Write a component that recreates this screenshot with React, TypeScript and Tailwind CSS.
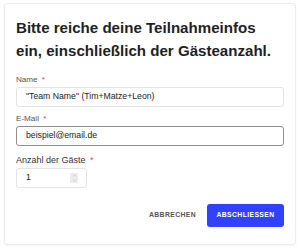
import { ChevronUp, ChevronDown } from "lucide-react";

const font = { fontFamily: '"Liberation Sans", Arial, sans-serif' };

function Label({ text, big = false }: { text: string; big?: boolean }) {
  return (
    <div
      className={`${big ? "h-[13px] leading-[13px] text-[9px] text-[#333] mb-[1px]" : "h-[11px] leading-[11px] text-[8.1px] text-[#555] mb-[2px]"}`}
    >
      {text} <span className="text-[#e0435a] ml-[2px]">*</span>
    </div>
  );
}

export default function App() {
  return (
    <div className="w-[300px] h-[248px] bg-white pt-[3px] px-[4px]" style={font}>
      <div className="h-[242px] rounded-[3px] border border-[#ececec] shadow-[0_1px_2px_rgba(0,0,0,0.05)] bg-white px-[11px] pt-[12px]">
        {/* Title */}
        <h1 className="w-[262px] text-[15.1px] leading-[23px] font-bold text-[#1f1f24]">
          Bitte reiche deine Teilnahmeinfos ein, einschließlich der Gästeanzahl.
        </h1>

        <div className="mt-[12px]">
          <Label text="Name" />
          <div className="h-[20px] w-[268px] rounded-[3px] border border-[#e3e3e3] flex items-center pl-[9px] text-[8.7px] text-[#222]">
            "Team Name" (Tim+Matze+Leon)
          </div>
        </div>

        <div className="mt-[6px]">
          <Label text="E-Mail" />
          <div className="h-[20px] w-[268px] rounded-[3px] border border-[#8f8f8f] flex items-center pl-[9px] text-[8.7px] text-[#222]">
            beispiel@email.de
          </div>
        </div>

        <div className="mt-[8px]">
          <Label text="Anzahl der Gäste" big />
          <div className="h-[20px] w-[71px] rounded-[3px] border border-[#e3e3e3] flex items-center justify-between pl-[9px] pr-[8px] text-[8.7px] text-[#222]">
            <span>1</span>
            <span className="flex flex-col items-center justify-center w-[8px] h-[10px] bg-[#ededed] rounded-[1px] text-[#aaa]">
              <ChevronUp size={5} strokeWidth={2.5} />
              <ChevronDown size={5} strokeWidth={2.5} />
            </span>
          </div>
        </div>

        <div className="mt-[16px] flex items-center justify-end gap-[11px] w-[268px]">
          <button className="text-[6.8px] font-bold tracking-[0.4px] text-[#555]">ABBRECHEN</button>
          <button className="h-[23px] w-[77px] rounded-[3px] bg-[#3042ff] text-white text-[6.8px] font-bold tracking-[0.4px]">
            ABSCHLIESSEN
          </button>
        </div>
      </div>
    </div>
  );
}
